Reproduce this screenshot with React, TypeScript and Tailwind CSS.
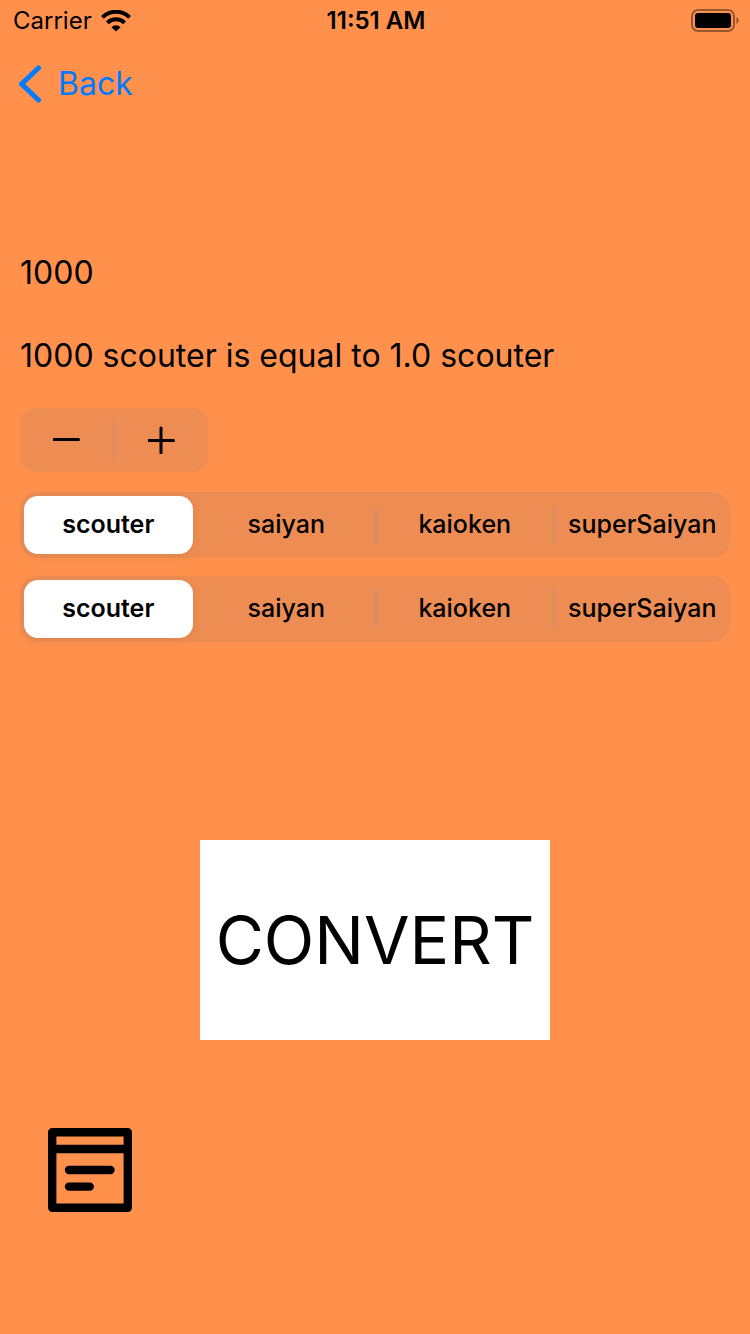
import { useState } from "react";

const units = ["scouter", "saiyan", "kaioken", "superSaiyan"];
const scale = [1000, 10000, 100000, 1000000];

function StatusBar() {
  return (
    <header className="grid h-10 grid-cols-3 items-center pl-[13px] pr-[11px] pt-px text-[24px] leading-7">
      <div className="flex items-center gap-[9px]">
        <span>Carrier</span>
        <svg width="30" height="22" viewBox="0 0 30 22" fill="none" stroke="#000" strokeWidth="4" aria-hidden="true">
          <path d="M1.4 7.4a19.2 19.2 0 0 1 27.2 0" />
          <path d="M6.4 12.8a12.2 12.2 0 0 1 17.2 0" />
          <path d="M10.4 17.2a6.6 6.600 0 0 1 9.2 0L15 21.6z" fill="#000" stroke="none" />
        </svg>
      </div>
      <span className="text-center font-semibold">11:51 AM</span>
      <svg className="justify-self-end" width="48" height="24" viewBox="0 0 48 24" aria-hidden="true">
        <rect x="1" y="1" width="42" height="21" rx="6" fill="none" stroke="#000" strokeOpacity="0.4" strokeWidth="2" />
        <rect x="4" y="4" width="36" height="15" rx="3" />
        <path d="M45.5 8c2.600 1.400 2.600 5.600 0 7z" fillOpacity="0.45" />
      </svg>
    </header>
  );
}

function Segments(props: { name: string; label: string; value: number; onChange: (i: number) => void }) {
  const { name, label, value, onChange } = props;
  return (
    <div role="radiogroup" aria-label={label} className="grid h-[66px] grid-cols-4 rounded-[18px] bg-[#767680]/12">
      {units.map((unit, i) => {
        const divided = i > 0 && i !== value && i - 1 !== value;
        return (
          <label key={unit} className="relative flex cursor-pointer items-center text-[25px]">
            <input
              type="radio"
              name={name}
              className="absolute inset-0 cursor-pointer appearance-none"
              checked={i === value}
              onChange={() => onChange(i)}
            />
            <span
              className={
                i === value
                  ? "ml-1 mr-[5px] flex h-[58px] flex-1 items-center justify-center rounded-[14px] bg-white font-semibold shadow-[0_2px_12px_rgba(0,0,0,0.08)]"
                  : divided
                    ? "flex h-[38px] flex-1 items-center justify-center border-l-2 border-[#8e8e93]/30 font-medium"
                    : "flex h-[38px] flex-1 items-center justify-center font-medium"
              }
            >
              {unit}
            </span>
          </label>
        );
      })}
    </div>
  );
}

export default function App() {
  const [amount, setAmount] = useState("1000");
  const [from, setFrom] = useState(0);
  const [to, setTo] = useState(0);
  const [result, setResult] = useState("1000 scouter is equal to 1.0 scouter");

  const step = (d: number) => setAmount(String(Math.max(0, (Number(amount) || 0) + d)));
  const convert = () => {
    const n = ((Number(amount) || 0) * scale[from]) / scale[to] / 1000;
    setResult(`${amount} ${units[from]} is equal to ${Number.isInteger(n) ? n.toFixed(1) : n} ${units[to]}`);
  };

  return (
    <div className="flex min-h-screen flex-col bg-[#ff914d] font-['Inter','Liberation_Sans',sans-serif] text-black">
      <StatusBar />
      <nav className="flex h-[88px] items-center px-[18px]">
        <a href="#back" className="flex items-center gap-4 text-[32px] leading-10 text-[#007aff]">
          <svg width="24" height="38" viewBox="0 0 24 38" fill="none" stroke="currentColor" strokeWidth="5" strokeLinecap="round" strokeLinejoin="round" aria-hidden="true">
            <path d="M20.500 3L3.500 19l17 16" />
          </svg>
          Back
        </a>
      </nav>

      <main className="flex flex-col px-5 pt-28">
        <div className="flex flex-col gap-5">
          <input
            aria-label="Amount"
            inputMode="numeric"
            value={amount}
            onChange={(e) => setAmount(e.target.value)}
            className="h-16 w-full bg-transparent text-[32px] outline-none"
          />
          <p className="flex min-h-16 items-center text-[32px] leading-10">{result}</p>
          <div className="flex h-16 w-[188px] items-center rounded-2xl bg-[#767680]/12">
            <button type="button" aria-label="Decrease" onClick={() => step(-1)} className="flex h-full flex-1 items-center justify-center">
              <svg width="28" height="28" viewBox="0 0 28 28" stroke="#000" strokeWidth="3" strokeLinecap="round">
                <path d="M.5 13.500h25" />
              </svg>
            </button>
            <span className="h-9 w-0.5 bg-[#8e8e93]/30" />
            <button type="button" aria-label="Increase" onClick={() => step(1)} className="flex h-full flex-1 items-center justify-center">
              <svg width="28" height="28" viewBox="0 0 28 28" stroke="#000" strokeWidth="3" strokeLinecap="round">
                <path d="M.5 14.500h25M13 2v25" />
              </svg>
            </button>
          </div>
          <div className="flex flex-col gap-[18px]">
            <Segments name="from" label="Convert from" value={from} onChange={setFrom} />
            <Segments name="to" label="Convert to" value={to} onChange={setTo} />
          </div>
        </div>

        <button type="button" onClick={convert} className="mt-[198px] h-[200px] w-[350px] self-center bg-white text-[66px]">
          CONVERT
        </button>

        <button type="button" aria-label="History" className="mb-10 ml-7 mt-[88px] self-start">
          <svg width="84" height="84" viewBox="0 0 84 84" fill="none" stroke="#000" strokeWidth="8.400" strokeLinecap="round" strokeLinejoin="round">
            <path d="M4.200 4.200h75.600v75.600H4.200zM4.200 21h75.600M21 42h41.500M21 58.600h20.800" />
          </svg>
        </button>
      </main>
    </div>
  );
}
